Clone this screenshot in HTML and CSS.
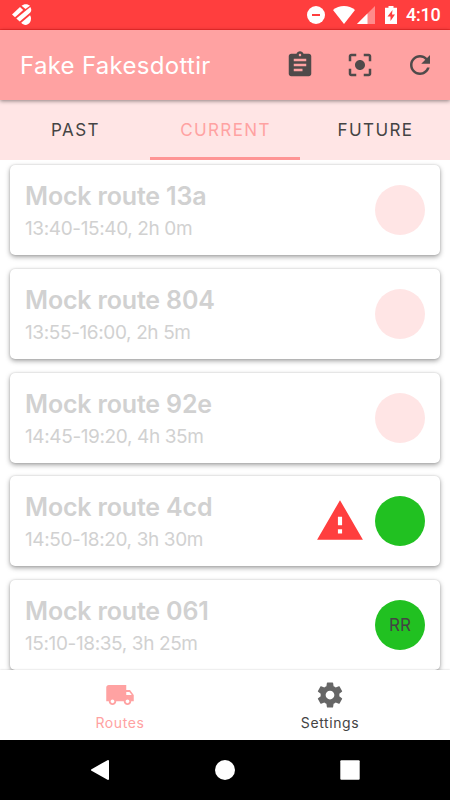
FILE: index.html
```html
<!DOCTYPE html>
<html lang="en">
<head>
    <meta charset="UTF-8">
    <meta name="viewport" content="width=device-width, initial-scale=1.0">
    <title>Routes</title>
    <link rel="stylesheet" href="styles.css">
</head>
<body>
    <div class="status-bar">
        <svg class="app-logo" width="20" height="22" viewBox="0 0 20 22">
            <g fill="#fff">
                <path d="M9.500 1.800C11.500-.2 16-.4 18 1.800L13.500 5z"/>
                <path d="M0 10.500L8 3l3.200 2.900L3 13.300z"/>
                <path d="M4.300 14.500L18.300 2.900C19.800 5 19.500 7.500 17.800 9L7.700 17.500z"/>
                <path d="M9.200 18.800L18 11.200C19.800 13 19.600 20 14 20.900C12 21 10.500 20.300 9.200 18.800z"/>
            </g>
        </svg>
        <div class="status-icons">
            <svg class="dnd" width="18" height="18" viewBox="0 0 18 18">
                <circle cx="9" cy="9" r="9" fill="#fff"/>
                <path d="M5 8h8v2H5z" fill="#ff3e3e"/>
            </svg>
            <svg class="wifi" width="22" height="18" viewBox="0 0 22 18">
                <path d="M11 18L0 4C6-1.300 16-1.300 22 4z" fill="#fff"/>
            </svg>
            <svg class="signal" width="18" height="18" viewBox="0 0 18 18">
                <path d="M0 18L18 0v18z" fill="#ff8b8b"/>
                <path d="M0 18L10.500 7.500V18z" fill="#fff"/>
            </svg>
            <svg class="battery" width="12" height="18" viewBox="0 0 12 18">
                <path d="M3.500 0h5v1.800H12V18H0V1.800h3.500z" fill="#fff"/>
                <path d="M7.500 4L2.500 10.500h3V15l4.500-6.500h-3z" fill="#ff3e3e"/>
            </svg>
            <span class="clock">4:10</span>
        </div>
    </div>

    <header class="app-bar">
        <h1>Fake Fakesdottir</h1>
        <div class="actions">
            <svg class="icon" viewBox="0 0 24 24"><path d="M19 3h-4.180C14.400 1.840 13.300 1 12 1c-1.300 0-2.400.84-2.820 2H5c-1.100 0-2 .9-2 2v14c0 1.100.9 2 2 2h14c1.100 0 2-.9 2-2V5c0-1.100-.9-2-2-2zm-7 0c.55 0 1 .45 1 1s-.45 1-1 1-1-.45-1-1 .45-1 1-1zm2 14H7v-2h7v2zm3-4H7v-2h10v2zm0-4H7V7h10v2z"/></svg>
            <svg class="icon" viewBox="0 0 24 24"><path d="M5 15H3v4c0 1.100.9 2 2 2h4v-2H5v-4zM5 5h4V3H5c-1.100 0-2 .9-2 2v4h2V5zm14-2h-4v2h4v4h2V5c0-1.100-.9-2-2-2zm0 16h-4v2h4c1.100 0 2-.9 2-2v-4h-2v4zM12 8c-2.210 0-4 1.790-4 4s1.790 4 4 4 4-1.790 4-4-1.790-4-4-4z"/></svg>
            <svg class="icon" viewBox="0 0 24 24"><path d="M17.650 6.350C16.200 4.900 14.210 4 12 4c-4.420 0-7.990 3.580-7.990 8s3.570 8 7.990 8c3.730 0 6.840-2.550 7.730-6h-2.080c-.82 2.330-3.040 4-5.650 4-3.310 0-6-2.690-6-6s2.690-6 6-6c1.660 0 3.140.69 4.220 1.780L13 11h7V4l-2.350 2.350z"/></svg>
        </div>
    </header>

    <nav class="tabs">
        <div class="tab">PAST</div>
        <div class="tab active">CURRENT</div>
        <div class="tab">FUTURE</div>
    </nav>

    <main class="routes">
        <div class="card">
            <div class="info">
                <h2>Mock route 13a</h2>
                <p>13:40-15:40, 2h 0m</p>
            </div>
            <div class="avatar"></div>
        </div>
        <div class="card">
            <div class="info">
                <h2>Mock route 804</h2>
                <p>13:55-16:00, 2h 5m</p>
            </div>
            <div class="avatar"></div>
        </div>
        <div class="card">
            <div class="info">
                <h2>Mock route 92e</h2>
                <p>14:45-19:20, 4h 35m</p>
            </div>
            <div class="avatar"></div>
        </div>
        <div class="card">
            <div class="info">
                <h2>Mock route 4cd</h2>
                <p>14:50-18:20, 3h 30m</p>
            </div>
            <svg class="warning" viewBox="0 0 24 24"><path d="M1 21h22L12 2 1 21zm12-3h-2v-2h2v2zm0-4h-2v-4h2v4z"/></svg>
            <div class="avatar assigned"></div>
        </div>
        <div class="card">
            <div class="info">
                <h2>Mock route 061</h2>
                <p>15:10-18:35, 3h 25m</p>
            </div>
            <div class="avatar assigned">RR</div>
        </div>
    </main>

    <nav class="bottom-nav">
        <div class="nav-item active">
            <svg class="icon" viewBox="0 0 24 24"><path d="M20 8h-3V4H3c-1.100 0-2 .9-2 2v11h2c0 1.660 1.340 3 3 3s3-1.340 3-3h6c0 1.660 1.340 3 3 3s3-1.340 3-3h2v-5l-3-4zM6 18.500c-.83 0-1.500-.67-1.500-1.500s.67-1.500 1.500-1.500 1.500.67 1.500 1.500-.67 1.500-1.500 1.500zm13.500-9l1.960 2.500H17V9.500h2.500zm-1.500 9c-.83 0-1.500-.67-1.500-1.500s.67-1.500 1.500-1.500 1.500.67 1.500 1.500-.67 1.500-1.500 1.500z"/></svg>
            <span>Routes</span>
        </div>
        <div class="nav-item">
            <svg class="icon" viewBox="0 0 24 24"><path d="M19.430 12.980c.04-.32.07-.64.07-.98s-.03-.66-.07-.98l2.110-1.650c.19-.15.24-.42.12-.64l-2-3.460c-.12-.22-.39-.3-.61-.22l-2.490 1c-.52-.4-1.080-.73-1.690-.98l-.38-2.650C14.460 2.180 14.250 2 14 2h-4c-.25 0-.46.18-.49.42l-.38 2.650c-.61.25-1.170.59-1.690.98l-2.490-1c-.23-.09-.49 0-.61.22l-2 3.460c-.13.22-.07.49.12.64l2.110 1.650c-.04.32-.07.65-.07.98s.03.66.07.98l-2.110 1.650c-.19.15-.24.42-.12.64l2 3.460c.12.22.39.3.61.22l2.490-1c.52.4 1.080.73 1.690.98l.38 2.650c.03.24.24.42.49.42h4c.25 0 .46-.18.49-.42l.38-2.650c.61-.25 1.170-.59 1.690-.98l2.490 1c.23.09.49 0 .61-.22l2-3.460c.12-.22.07-.49-.12-.64l-2.110-1.650zM12 15.500c-1.930 0-3.500-1.570-3.500-3.500s1.570-3.500 3.500-3.500 3.500 1.570 3.500 3.500-1.570 3.500-3.500 3.500z"/></svg>
            <span>Settings</span>
        </div>
    </nav>

    <div class="system-nav">
        <svg width="20" height="20" viewBox="0 0 20 20"><path d="M2 10L18 1v18z" fill="#fff" stroke="#fff" stroke-width="2" stroke-linejoin="round"/></svg>
        <svg width="20" height="20" viewBox="0 0 20 20"><circle cx="10" cy="10" r="10" fill="#fff"/></svg>
        <svg width="20" height="20" viewBox="0 0 20 20"><rect x=".3" y=".3" width="19.400" height="19.400" rx="1" fill="#fff"/></svg>
    </div>
</body>
</html>
```
FILE: styles.css
```css
* {
    box-sizing: border-box;
}
body {
    margin: 0;
    height: 800px;
    display: flex;
    flex-direction: column;
    overflow: hidden;
    background-color: #fff;
    font-family: 'Inter', 'Liberation Sans', sans-serif;
    color: #444;
}
h1, h2, p {
    margin: 0;
}
svg {
    display: block;
    flex: none;
}
.icon {
    width: 30px;
    height: 30px;
    fill: #4f4a4a;
}
.status-bar {
    height: 30px;
    flex: none;
    display: flex;
    justify-content: space-between;
    align-items: center;
    padding: 1px 9px 0 12px;
    background-color: #ff3e3e;
    border-bottom: 1px solid #f82c2c;
}
.status-icons {
    display: flex;
    align-items: center;
}
.wifi {
    margin-left: 8px;
}
.signal {
    margin-left: 2px;
}
.battery {
    margin-left: 10px;
}
.clock {
    width: 35px;
    margin-left: 9px;
    font-family: 'Roboto', sans-serif;
    font-size: 18px;
    font-weight: 500;
    line-height: 20px;
    letter-spacing: -0.2px;
    color: #fff;
}
.app-bar {
    height: 70px;
    flex: none;
    display: flex;
    justify-content: space-between;
    align-items: center;
    padding: 0 15px 0 20px;
    background-color: #ffa2a2;
    box-shadow: 0 1px 4px rgba(0, 0, 0, 0.45);
    z-index: 1;
}
.app-bar h1 {
    font-size: 24px;
    font-weight: 400;
    letter-spacing: 0.3px;
    padding-top: 1px;
    color: #fff;
}
.actions {
    display: flex;
    gap: 30px;
}
.tabs {
    height: 60px;
    flex: none;
    display: flex;
    background-color: #ffe5e5;
}
.tab {
    flex: 1;
    padding: 3px 0 0 1px;
    border-bottom: 3px solid transparent;
    font-size: 17px;
    line-height: 54px;
    letter-spacing: 1.4px;
    text-align: center;
}
.tab.active {
    color: #ffa2a2;
    border-bottom-color: #ff9595;
}
.routes {
    flex: 1;
    min-height: 0;
    overflow: hidden;
    padding: 5px 10px 0;
}
.card {
    height: 90px;
    display: flex;
    align-items: center;
    gap: 10px;
    margin-bottom: 13.8px;
    padding: 0 15px;
    border-radius: 5px;
    background-color: #fff;
    box-shadow: 0 2px 5px rgba(0, 0, 0, 0.36), 0 0 2px rgba(0, 0, 0, 0.16);
}
.info {
    flex: 1;
    padding-top: 1px;
    color: #d1d1d1;
}
.info h2 {
    font-size: 25px;
    font-weight: 600;
    line-height: 32px;
    letter-spacing: -0.17px;
}
.info p {
    font-size: 19px;
    line-height: 24px;
    letter-spacing: -0.38px;
    margin-top: 5px;
}
.avatar {
    width: 50px;
    height: 50px;
    border-radius: 50%;
    background-color: #ffe5e5;
    font-size: 17px;
    line-height: 50px;
    text-align: center;
}
.avatar.assigned {
    background-color: #21c121;
}
.warning {
    width: 50px;
    height: 50px;
    fill: #ff3e3e;
}
.bottom-nav {
    height: 70px;
    flex: none;
    display: flex;
    justify-content: center;
    background-color: #fff;
    box-shadow: 0 0 2px rgba(0, 0, 0, 0.2);
    z-index: 1;
}
.nav-item {
    width: 210px;
    display: flex;
    flex-direction: column;
    align-items: center;
    padding-top: 10px;
    font-size: 14px;
    line-height: 25px;
    letter-spacing: 0.6px;
}
.nav-item .icon {
    fill: #666;
}
.nav-item.active {
    color: #ffa2a2;
}
.nav-item.active .icon {
    fill: #ffa2a2;
}
.system-nav {
    height: 60px;
    flex: none;
    display: flex;
    justify-content: center;
    align-items: center;
    gap: 105px;
    background-color: #000;
}
```
